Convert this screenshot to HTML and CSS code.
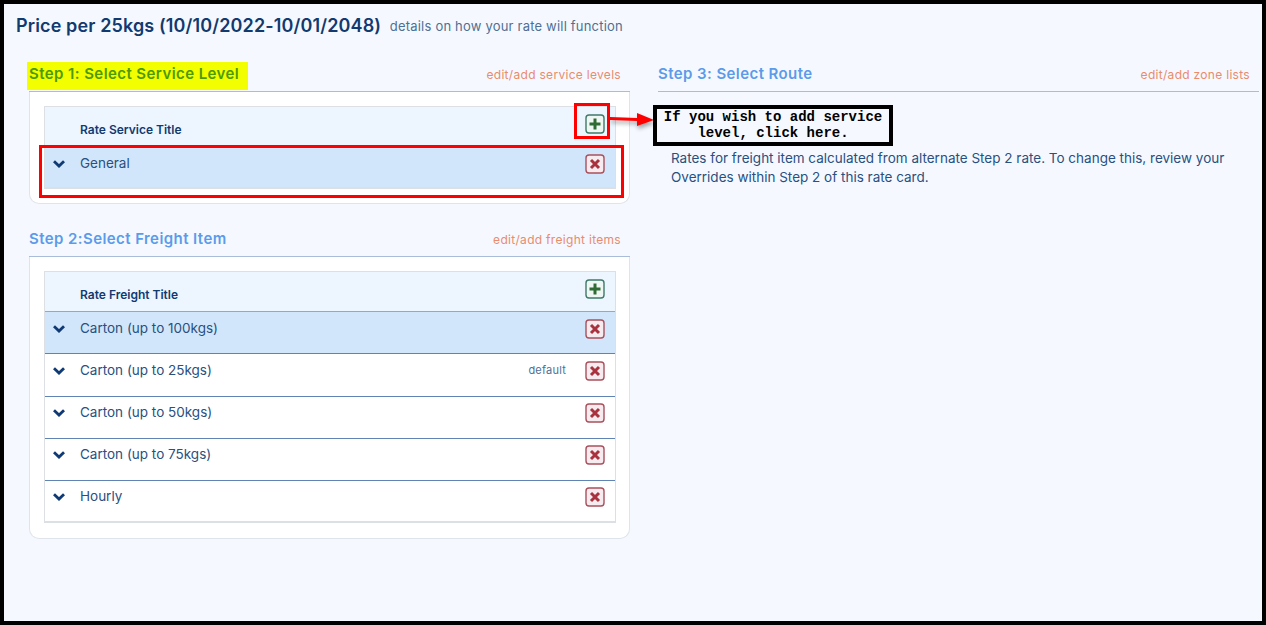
FILE: index.html
```html
<!DOCTYPE html>
<html lang="en">
<head>
<meta charset="utf-8">
<title>Price per 25kgs</title>
<link rel="stylesheet" href="styles.css">
</head>
<body>
<svg width="0" height="0" class="defs">
  <symbol id="chev" viewBox="0 0 14 10"><path d="M2 2.200 7 7l5-4.800" fill="none" stroke="#0f3a75" stroke-width="2.800"/></symbol>
  <symbol id="plus" viewBox="0 0 20 20"><rect x="1" y="1" width="18" height="18" rx="3" fill="#eef7f3" stroke="#3f7a6a" stroke-width="1.400"/><path d="M10 4.500v11M4.500 10h11" stroke="#2f6b34" stroke-width="3"/></symbol>
  <symbol id="cross" viewBox="0 0 20 20"><rect x="1" y="1" width="18" height="18" rx="3" fill="#f6ecf0" stroke="#a9505c" stroke-width="1.400"/><path d="m6 6 8 8M14 6l-8 8" stroke="#a8333f" stroke-width="3"/></symbol>
</svg>
<main class="frame">
  <h1 class="title">Price per 25kgs (10/10/2022-10/01/2048) <small>details on how your rate will function</small></h1>
  <div class="columns">
    <div class="col">
      <section class="step step-one">
        <header class="step-head"><h2 class="marked">Step 1: Select Service Level</h2><a>edit/add service levels</a></header>
        <div class="card">
          <div class="table">
            <div class="thead"><span>Rate Service Title</span><svg class="ico"><use href="#plus"/></svg></div>
            <div class="row active last"><svg class="chev"><use href="#chev"/></svg><span class="name">General</span><svg class="ico"><use href="#cross"/></svg></div>
          </div>
        </div>
      </section>
      <section class="step step-two">
        <header class="step-head"><h2>Step 2:Select Freight Item</h2><a>edit/add freight items</a></header>
        <div class="card">
          <div class="table">
            <div class="thead thead-rule"><span>Rate Freight Title</span><svg class="ico"><use href="#plus"/></svg></div>
            <div class="row active"><svg class="chev"><use href="#chev"/></svg><span class="name">Carton (up to 100kgs)</span><svg class="ico"><use href="#cross"/></svg></div>
            <div class="row"><svg class="chev"><use href="#chev"/></svg><span class="name">Carton (up to 25kgs)</span><em>default</em><svg class="ico"><use href="#cross"/></svg></div>
            <div class="row"><svg class="chev"><use href="#chev"/></svg><span class="name">Carton (up to 50kgs)</span><svg class="ico"><use href="#cross"/></svg></div>
            <div class="row"><svg class="chev"><use href="#chev"/></svg><span class="name">Carton (up to 75kgs)</span><svg class="ico"><use href="#cross"/></svg></div>
            <div class="row last"><svg class="chev"><use href="#chev"/></svg><span class="name">Hourly</span><svg class="ico"><use href="#cross"/></svg></div>
          </div>
        </div>
      </section>
    </div>
    <div class="col">
      <section class="step">
        <header class="step-head"><h2>Step 3: Select Route</h2><a>edit/add zone lists</a></header>
        <p class="note">Rates for freight item calculated from alternate Step 2 rate. To change this, review your Overrides within Step 2 of this rate card.</p>
      </section>
    </div>
  </div>
  <div class="box box-row"></div>
  <div class="box box-plus"></div>
  <svg class="arrow" width="46" height="24" viewBox="0 0 46 24"><path d="M0 8 27 9V4L44 11 27 17V12L0 11Z" fill="#f00"/></svg>
  <div class="callout">If you wish to add service<br>level, click here.</div>
</main>
</body>
</html>
```
FILE: styles.css
```css
* { box-sizing: border-box; }
html, body { margin: 0; height: 100%; }
body { background: #000; font-family: Inter, "Liberation Sans", sans-serif; color: #1c3f72; }
.defs { position: absolute; }
.frame { position: relative; width: 1258px; height: 617px; margin: 4px; background: #f5f9ff; padding: 11px 0 0 12px; overflow: hidden; }
.title { margin: 0; font-size: 18px; line-height: 22px; font-weight: 600; color: #123a6f; letter-spacing: .13px; }
.title small { margin-left: 4px; font-size: 13px; font-weight: 400; color: #4f6f93; letter-spacing: .2px; vertical-align: 1px; }
.columns { display: flex; gap: 28px; padding: 28px 0 0 13px; }
.col { width: 601px; }
.step-head { display: flex; justify-content: space-between; align-items: baseline; height: 27px; border-bottom: 1px solid #a9bdd8; }
.step-head h2 { margin: 0; font-size: 15px; line-height: 18px; font-weight: 600; color: #5b9bea; letter-spacing: .42px; }
.step-head a { font-size: 12px; color: #e98b6d; letter-spacing: .3px; padding-right: 9px; }
.step-head h2.marked { position: relative; color: #4c9a00; z-index: 0; }
.marked::before { content: ""; position: absolute; z-index: -1; left: -2px; top: -3px; width: 221px; height: 28px; background: #f3ff00; }
.card { background: #fff; border: 1px solid #dfe4ea; border-top: 0; border-radius: 0 0 10px 10px; padding: 14px 13px 14px 14px; }
.step-two { margin-top: 25px; }
.step-two .step-head { height: 28px; }
.step-two .step-head h2 { line-height: 20px; }
.step-two .card { padding: 14px 13px 15px 14px; }
.table { border: 1px solid #dcdfe3; border-bottom-width: 2px; }
.thead { position: relative; display: flex; align-items: flex-end; height: 40px; padding: 0 0 9px 35px; background: #edf6ff; font-size: 12px; font-weight: 600; color: #123a6f; line-height: 16px; }
.thead-rule { padding-bottom: 8px; border-bottom: 1px solid #8fa9cc; }
.ico { width: 20px; height: 20px; flex: none; }
.thead .ico { position: absolute; right: 10px; top: 7px; }
.row { display: flex; align-items: center; height: 42.25px; padding: 0 10px 10px 7px; background: #fff; border-bottom: 1px solid #5f84b3; font-size: 13.5px; color: #29507f; }
.row .ico { margin-top: 2px; }
.row.active { background: #d2e6fb; }
.row.last { height: 40.25px; border-bottom: 0; }
.step-one .row.last { height: 40px; padding-bottom: 8px; }
.chev { width: 14px; height: 10px; margin: 2px 14px 0 0; flex: none; }
.name { flex: 1; }
.row em { font-style: normal; font-size: 11px; color: #4f6f93; margin-right: 19px; letter-spacing: .2px; }
.note { margin: 57px 0 0 13px; font-size: 13.5px; line-height: 19px; color: #29507f; }
.box { position: absolute; border: 3px solid #f00; }
.box-row { left: 35px; top: 141px; width: 585px; height: 53px; }
.box-plus { left: 570px; top: 99px; width: 36px; height: 36px; }
.arrow { position: absolute; left: 606px; top: 105px; filter: drop-shadow(1px 3px 2px rgba(0,0,0,.35)); }
.callout { position: absolute; left: 649px; top: 101px; width: 240px; height: 41px; background: #f5f9ff; border: 4px solid #000; font: 700 14px/16px "Liberation Mono", monospace; color: #000; text-align: center; }
```
